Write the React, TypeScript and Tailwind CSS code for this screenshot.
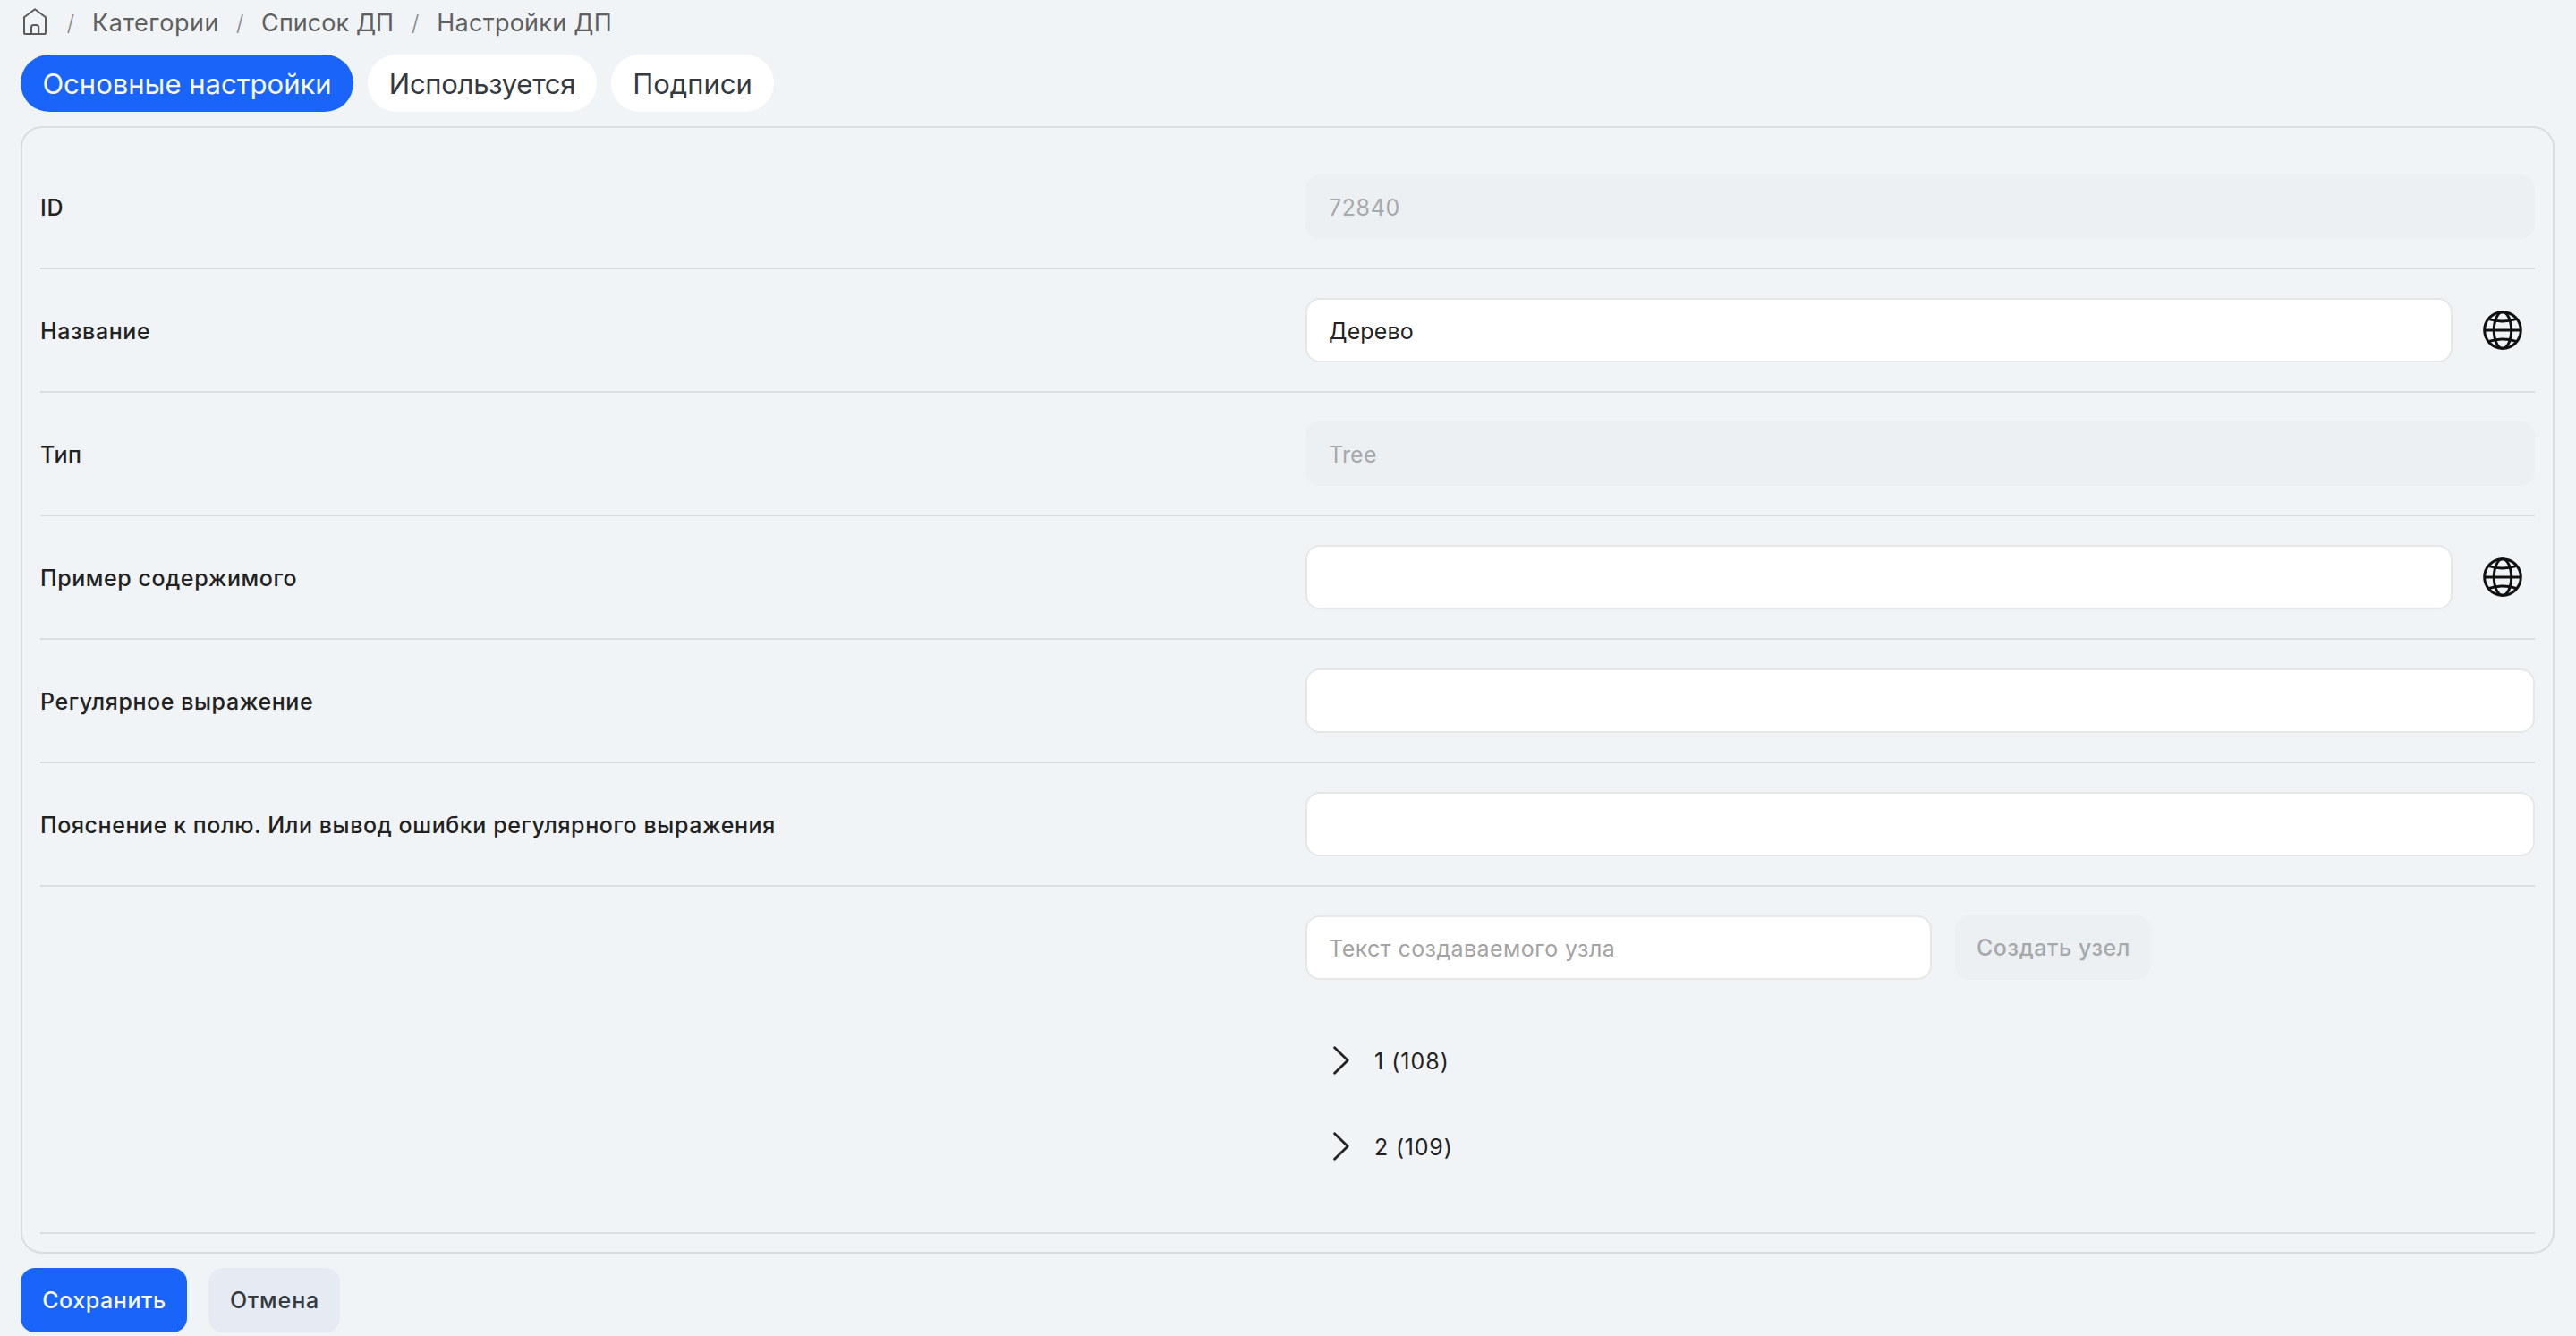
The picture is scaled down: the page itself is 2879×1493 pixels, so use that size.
import React from "react";

function HomeIcon() {
  return (
    <svg className="h-[30px] w-[26px] shrink-0" viewBox="0 0 26 30" fill="none" stroke="#5c5c5c" strokeWidth="2" strokeLinejoin="round">
      <path d="M13 1.2 1 10.2V27.4Q1 29 2.7 29H23.3Q25 29 25 27.4V10.2Z" />
      <path d="M9 29V21.5Q9 18.9 11.6 18.9H14.6Q17.2 18.9 17.2 21.5V29" />
    </svg>
  );
}

function GlobeIcon() {
  return (
    <svg className="size-11" viewBox="0 0 44 44" fill="none" stroke="#111111" strokeWidth="3">
      <circle cx="22" cy="22" r="20.3" />
      <ellipse cx="22" cy="22" rx="9.7" ry="20.3" />
      <path d="M1.6 22H42.4M7 9.6Q22 14.4 37 9.6M7 34.4Q22 29.6 37 34.4" />
    </svg>
  );
}

function ChevronIcon() {
  return (
    <svg className="h-8 w-[18px]" viewBox="0 0 18 32" fill="none" stroke="#222222" strokeWidth="2.8" strokeLinecap="round" strokeLinejoin="round">
      <path d="M1.6 1.8 16.2 16 1.6 30.2" />
    </svg>
  );
}

const Slash = ({ className = "ml-[18px] mr-[19px]" }: { className?: string }) => (
  <span className={`w-2.5 text-center text-[24px] font-light leading-[33px] text-[#858585] ${className}`}>/</span>
);

const inputBase =
  "h-[72px] min-w-0 rounded-2xl border-2 px-6 pt-0.5 text-[25px] outline-none placeholder:text-[#a3a3a3] placeholder:opacity-100";

type FieldProps = { value?: string; disabled?: boolean; placeholder?: string; className: string };

function Field({ value = "", disabled, placeholder, className }: FieldProps) {
  const tone = disabled
    ? "border-[#ecf0f3] bg-[#ecf0f3] text-[#a6a9ab]"
    : "border-[#e5e7e8] bg-white text-[#222222]";
  return (
    <input className={`${inputBase} ${tone} ${className}`} value={value} placeholder={placeholder} disabled={disabled} readOnly />
  );
}

type RowData = { label: string; value?: string; disabled?: boolean; globe?: boolean; tracking?: string };

const rows: RowData[] = [
  { label: "ID", value: "72840", disabled: true, tracking: "tracking-[0.6px]" },
  { label: "Название", value: "Дерево", globe: true, tracking: "tracking-[0.15px]" },
  { label: "Тип", value: "Tree", disabled: true, tracking: "tracking-[0.2px]" },
  { label: "Пример содержимого", globe: true },
  { label: "Регулярное выражение" },
  { label: "Пояснение к полю. Или вывод ошибки регулярного выражения" },
];

function Row({ label, value, disabled, globe, tracking = "" }: RowData) {
  return (
    <div className="grid h-[138px] grid-cols-2 items-center gap-10 border-b-2 border-[#d9dde0]">
      <div className="pt-0.5 text-[25px] font-medium leading-[30px] tracking-[0.58px]">{label}</div>
      <div className="flex gap-5">
        <Field value={value} disabled={disabled} className={`flex-1 ${tracking}`} />
        {globe && (
          <button className="flex size-[72px] items-center justify-center">
            <GlobeIcon />
          </button>
        )}
      </div>
    </div>
  );
}

function TreeNode({ text, tracking }: { text: string; tracking: string }) {
  return (
    <div className="flex h-24 items-center pl-[31px]">
      <ChevronIcon />
      <span className={`ml-7 pt-0.5 text-[25px] leading-[30px] ${tracking}`}>{text}</span>
    </div>
  );
}

export default function App() {
  return (
    <div className="h-[1493px] w-full overflow-hidden bg-[#f0f4f7] pl-[23px] pr-6 pt-[9px] font-['Inter',sans-serif] text-[#222222]">
      <nav className="flex h-[33px] items-start whitespace-nowrap pl-[3px] text-[27px] leading-[33px] text-[#606060]">
        <HomeIcon />
        <Slash className="ml-[22px] mr-[19px]" />
        <a className="tracking-[0.55px]">Категории</a>
        <Slash />
        <a className="tracking-[0.06px]">Список ДП</a>
        <Slash className="mx-[19px]" />
        <a className="tracking-[0.25px]">Настройки ДП</a>
      </nav>

      <div className="mt-[19px] flex gap-4 text-[31px] text-[#343a40]">
        <button className="h-16 w-[372px] rounded-full bg-[#1965fa] pt-0.5 text-[#f8f9fa]">Основные настройки</button>
        <button className="h-16 w-64 rounded-full bg-white pt-0.5 tracking-[-0.27px]">Используется</button>
        <button className="h-16 w-[182px] rounded-full bg-white pt-0.5">Подписи</button>
      </div>

      <main className="mt-4 h-[1260px] rounded-3xl border-2 border-[#d9dde0] p-5">
        {rows.map((row) => (
          <Row key={row.label} {...row} />
        ))}
        <div className="grid h-[388px] grid-cols-2 gap-10 border-b-2 border-[#d9dde0] pt-8">
          <div className="col-start-2">
            <div className="flex gap-[26px]">
              <Field placeholder="Текст создаваемого узла" className="w-[700px] tracking-[0.45px]" />
              <button className="h-[72px] w-[219px] rounded-2xl bg-[#ecf0f3] pl-px pt-0.5 text-[25px] font-medium tracking-[0.57px] text-[#a6a9ab]">
                Создать узел
              </button>
            </div>
            <div className="mt-[42px]">
              <TreeNode text="1 (108)" tracking="tracking-[1px]" />
              <TreeNode text="2 (109)" tracking="tracking-[0.8px]" />
            </div>
          </div>
        </div>
      </main>

      <footer className="mt-4 flex gap-6 text-[25px] font-medium">
        <button className="h-[72px] w-[186px] rounded-2xl bg-[#1965fa] pl-px pt-0.5 tracking-[0.6px] text-[#f8f9fa]">Сохранить</button>
        <button className="h-[72px] w-[147px] rounded-2xl bg-[#e6eaf2] pl-px pt-0.5 tracking-[0.86px] text-[#343a40]">Отмена</button>
      </footer>
    </div>
  );
}
